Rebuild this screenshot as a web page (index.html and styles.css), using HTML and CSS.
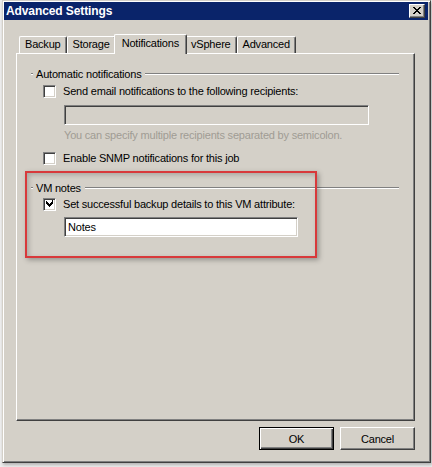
FILE: index.html
```html
<!DOCTYPE html>
<html>
<head>
<meta charset="utf-8">
<link rel="stylesheet" href="styles.css">
</head>
<body>
<div class="window">
  <div class="titlebar">
    <span class="title">Advanced Settings</span>
    <span class="close">
      <svg width="8" height="7" viewBox="0 0 8 7" shape-rendering="crispEdges">
        <path d="M0 0h2v1h-2zM6 0h2v1h-2zM1 1h2v1h-2zM5 1h2v1h-2zM2 2h4v1h-4zM3 3h2v1h-2zM2 4h4v1h-4zM1 5h2v1h-2zM5 5h2v1h-2zM0 6h2v1h-2zM6 6h2v1h-2z" fill="#000"/>
      </svg>
    </span>
  </div>
  <div class="content">
    <div class="tabs">
      <div class="tab">Backup</div>
      <div class="tab">Storage</div>
      <div class="tab selected">Notifications</div>
      <div class="tab">vSphere</div>
      <div class="tab">Advanced</div>
    </div>
    <div class="panel">
      <div class="group">
        <div class="legend"><span class="tick"></span><span class="legend-text">Automatic notifications</span><span class="rule"></span></div>
        <div class="check-row first">
          <span class="checkbox"></span>
          <span class="label">Send email notifications to the following recipients:</span>
        </div>
        <div class="field wide disabled"></div>
        <div class="hint">You can specify multiple recipients separated by semicolon.</div>
        <div class="check-row second">
          <span class="checkbox"></span>
          <span class="label">Enable SNMP notifications for this job</span>
        </div>
      </div>
      <div class="group vm">
        <div class="legend"><span class="tick"></span><span class="legend-text">VM notes</span><span class="rule"></span></div>
        <div class="check-row vm-check">
          <span class="checkbox">
            <svg width="9" height="9" viewBox="0 0 9 9" shape-rendering="crispEdges">
              <path d="M6 1h1v3h-1zM5 2h1v3h-1zM4 3h1v3h-1zM3 4h1v3h-1zM2 3h1v3h-1zM1 2h1v3h-1zM0 1h1v3h-1z" fill="#000" transform="translate(1,0)"/>
              <path d="M7 0h1v3h-1z" fill="#000"/>
            </svg>
          </span>
          <span class="label">Set successful backup details to this VM attribute:</span>
        </div>
        <div class="field narrow">Notes</div>
      </div>
    </div>
    <div class="buttons">
      <div class="btn default"><span>OK</span></div>
      <div class="btn"><span>Cancel</span></div>
    </div>
  </div>
  <div class="highlight"></div>
</div>
</body>
</html>
```

FILE: styles.css
```css
* { box-sizing: border-box; }
html, body { margin: 0; padding: 0; }
body {
  width: 432px;
  height: 467px;
  background: #eeeeee;
  font-family: "Liberation Sans", Arial, sans-serif;
  font-size: 11px;
  letter-spacing: -0.2px;
  color: #000;
  overflow: hidden;
}
.window {
  position: relative;
  margin-left: 2px;
  width: 429px;
  height: 463px;
  background: #d4d0c8;
  border: 1px solid;
  border-color: #d4d0c8 #404040 #404040 #d4d0c8;
  box-shadow: inset 1px 1px #fff, inset -1px -1px #808080, 1px 2px 3px rgba(0,0,0,0.25);
  padding: 1px 2px 2px 1px;
}
.titlebar {
  height: 18px;
  background: #0a246a;
  display: flex;
  align-items: center;
  justify-content: space-between;
  padding: 0 3px 0 2px;
}
.title {
  color: #fff;
  font-weight: bold;
  font-size: 12px;
  letter-spacing: -0.1px;
}
.close {
  width: 16px;
  height: 14px;
  background: #d4d0c8;
  border: 1px solid;
  border-color: #fff #404040 #404040 #fff;
  box-shadow: inset -1px -1px #808080;
  display: flex;
  align-items: center;
  justify-content: center;
  padding-bottom: 1px;
}
.close svg { display: block; }
.content {
  padding: 0 13px 0 12px;
}
.tabs {
  display: flex;
  align-items: flex-end;
  height: 33px;
  padding-left: 3px;
  position: relative;
  z-index: 2;
}
.tab {
  height: 17px;
  line-height: 15px;
  padding: 0 5px 0 5px;
  border-top: 1px solid #fff;
  border-left: 1px solid #fff;
  border-right: 1px solid #404040;
  box-shadow: inset -1px 0 #808080;
  border-radius: 2px 2px 0 0;
  background: #d4d0c8;
}
.tab.selected {
  height: 20px;
  margin: 0 -2px -1px -2px;
  padding: 0 7px;
  line-height: 17px;
  position: relative;
  z-index: 3;
}
.tab.selected + .tab { border-left: none; padding-left: 6px; }
.panel {
  height: 368px;
  border: 1px solid;
  border-color: #fff #404040 #404040 #fff;
  box-shadow: inset -1px -1px #808080;
  padding: 14px 15px 0 14px;
}
.group { position: relative; }
.legend {
  display: flex;
  align-items: center;
  height: 13px;
  line-height: 13px;
}
.tick {
  width: 2px;
  height: 2px;
  border-top: 1px solid #808080;
  border-bottom: 1px solid #fff;
  margin-top: -1px;
}
.legend-text { padding: 0 4px 0 3px; }
.rule {
  flex: 1;
  height: 2px;
  border-top: 1px solid #808080;
  border-bottom: 1px solid #fff;
  margin-top: -1px;
}
.check-row {
  display: flex;
  align-items: center;
  height: 13px;
  margin-left: 12px;
  line-height: 13px;
}
.check-row.first { margin-top: 4px; }
.check-row.second { margin-top: 10px; }
.check-row.vm-check { margin-top: 3px; }
.checkbox {
  width: 13px;
  height: 13px;
  background: #fff;
  border: 1px solid;
  border-color: #808080 #fff #fff #808080;
  box-shadow: inset 1px 1px #404040, inset -1px -1px #d4d0c8;
  display: flex;
  align-items: center;
  justify-content: center;
  flex: none;
}
.checkbox svg { display: block; }
.label { margin-left: 7px; }
.field {
  margin-left: 33px;
  height: 20px;
  background: #fff;
  border: 1px solid;
  border-color: #808080 #fff #fff #808080;
  box-shadow: inset 1px 1px #404040, inset -1px -1px #d4d0c8;
  padding: 0 3px;
  line-height: 18px;
}
.field.wide { width: 305px; margin-top: 7px; }
.field.disabled { background: #d4d0c8; }
.field.narrow { width: 234px; margin-top: 6px; }
.hint {
  margin-left: 33px;
  margin-top: 4px;
  height: 13px;
  line-height: 13px;
  color: #a09c94;
}
.group.vm { margin-top: 17px; }
.buttons {
  display: flex;
  justify-content: flex-end;
  gap: 6px;
  margin-top: 6px;
}
.btn {
  width: 75px;
  height: 23px;
  border: 1px solid;
  border-color: #fff #404040 #404040 #fff;
  box-shadow: inset -1px -1px #808080;
  display: flex;
  align-items: center;
  justify-content: center;
  background: #d4d0c8;
}
.btn.default {
  border: 1px solid #000;
  box-shadow: inset 1px 1px #fff, inset -1px -1px #404040, inset -2px -2px #808080;
}
.highlight {
  position: absolute;
  left: 22px;
  top: 170px;
  width: 292px;
  height: 87px;
  border: 2px solid #d8393b;
  box-shadow: 2px 2px 5px rgba(0,0,0,0.3), inset 2px 2px 5px rgba(0,0,0,0.2);
  pointer-events: none;
}
```
